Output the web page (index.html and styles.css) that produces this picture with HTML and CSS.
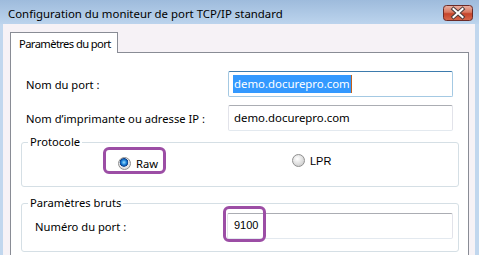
FILE: index.html
```html
<!DOCTYPE html>
<html lang="fr">
  <head>
    <meta charset="UTF-8" />
    <title>Configuration du moniteur de port TCP/IP standard</title>
    <link rel="stylesheet" href="styles.css">
  </head>
  <body>
    <div class="titlebar">
      <span class="title">Configuration du moniteur de port TCP/IP standard</span>
      <svg class="close" width="30" height="16" viewBox="0 0 30 16">
        <defs>
          <linearGradient id="closeFill" x1="0" y1="0" x2="0" y2="1">
            <stop offset="0" stop-color="#eab3a6" />
            <stop offset="0.45" stop-color="#d9775f" />
            <stop offset="0.55" stop-color="#c5432a" />
            <stop offset="1" stop-color="#d8694d" />
          </linearGradient>
        </defs>
        <rect x="0.5" y="0.5" width="29" height="15" rx="3" fill="url(#closeFill)" stroke="#6b2a27" />
        <path d="M10.5 4 L19.5 12 M19.5 4 L10.5 12" stroke="#4b3b3b" stroke-width="4" stroke-linecap="square" />
        <path d="M10.5 4 L19.5 12 M19.5 4 L10.5 12" stroke="#ffffff" stroke-width="2" stroke-linecap="square" />
      </svg>
    </div>
    <div class="client">
      <div class="tab">Paramètres du port</div>
      <div class="panel">
        <div class="row">
          <span class="label">Nom du port :</span>
          <div class="field focused"><span class="selected">demo.docurepro.com</span></div>
        </div>
        <div class="row">
          <span class="label">Nom d’imprimante ou adresse IP :</span>
          <div class="field">demo.docurepro.com</div>
        </div>

        <!-- Protocol choice -->
        <fieldset class="group">
          <legend>Protocole</legend>
          <div class="radios">
            <label class="option marked"><span class="radio checked"></span>Raw</label>
            <label class="option lpr"><span class="radio"></span>LPR</label>
          </div>
        </fieldset>

        <fieldset class="group">
          <legend>Paramètres bruts</legend>
          <div class="row raw-row">
            <span class="label">Numéro du port :</span>
            <div class="field number">9100<span class="mark"></span></div>
          </div>
        </fieldset>
      </div>
    </div>
  </body>
</html>
```

FILE: styles.css
```css
/* Windows 7 basic style dialog */
body {
  margin: 0;
  width: 479px;
  height: 255px;
  overflow: hidden;
  background-color: #c1d7ee;
  font-family: "Noto Sans", sans-serif;
  font-size: 11.2px;
  color: #000;
}
.titlebar {
  height: 24px;
  display: flex;
  justify-content: space-between;
  padding: 0 6px 0 8px;
  background: linear-gradient(#9ebbdc, #bcd4ed);
}
.title {
  font-size: 11.4px;
  line-height: 27px;
}
.close {
  margin-top: 5px;
}
.client {
  margin: 0 4px 0 3px;
  height: 223px;
  overflow: hidden;
  padding: 8px 6px 0 7px;
  background-color: #f6f2f6;
}
.tab {
  display: inline-block;
  vertical-align: top;
  height: 20px;
  padding: 0 6px 0 8px;
  line-height: 21px;
  white-space: nowrap;
  letter-spacing: -0.6px;
  border: 1px solid #898c95;
  border-bottom: none;
  background-color: #fff;
  margin-bottom: -1px;
  position: relative;
}
.panel {
  border: 1px solid #898c95;
  background-color: #fff;
  padding: 18px 9px 40px 10px;
}
.row {
  display: grid;
  grid-template-columns: 202px 225px;
  align-items: center;
  padding: 0 6px 0 5px;
  margin-bottom: 8px;
}
.label {
  white-space: nowrap;
}
.field {
  height: 26px;
  box-sizing: border-box;
  padding-left: 5px;
  line-height: 23px;
  border: 1px solid #e2e3ea;
  border-top-color: #abadb3;
  border-bottom-color: #e3e9ef;
  border-radius: 2px;
  font-size: 11.4px;
}
.field.focused {
  border-color: #a4c9e3;
  border-top-color: #3d7bad;
  padding-left: 4px;
}
.selected {
  background-color: #3399ff;
  color: #fff;
  padding: 1px 1px 2px;
  border-right: 1px solid #c2611c;
}
.group {
  margin: 0;
  padding: 0 5px 12px 0;
  border: 1px solid #d5dfe5;
  border-radius: 3px;
}
.group + .group {
  margin-top: 11px;
}
.row + .group {
  margin-top: -2px;
}
legend {
  margin-left: 6px;
  padding: 0 2px;
  line-height: 10px;
}
.radios {
  display: flex;
  align-items: center;
  padding-left: 81px;
}
.option {
  display: flex;
  align-items: center;
  gap: 5px;
}
.marked {
  width: 63px;
  height: 27px;
  box-sizing: border-box;
  padding: 6px 0 0 12px;
  border: 3px solid #9c4ea5;
  border-radius: 6px;
}
.lpr {
  margin-left: 126px;
  font-family: "Liberation Sans", sans-serif;
  font-size: 11px;
}
.radio {
  width: 13px;
  height: 13px;
  box-sizing: border-box;
  border-radius: 50%;
  border: 1px solid #8f8f8f;
  background: radial-gradient(circle at 40% 35%, #ffffff, #d4d4d4 70%);
}
.radio.checked {
  background: radial-gradient(circle at 45% 40%, #9fe0ff 0, #1a80d8 2.5px, #0d3f8a 4px, #e8e8e8 4.6px, #cfcfcf 100%);
}
.raw-row {
  grid-template-columns: 192px 226px;
  padding: 5px 0 0 13px;
  margin-bottom: 0;
}
.number {
  position: relative;
  font-family: "Liberation Sans", sans-serif;
  font-size: 11px;
  padding-left: 6px;
}
/* annotation box drawn over the port number */
.mark {
  position: absolute;
  left: -5px;
  top: -8px;
  width: 37px;
  height: 30px;
  border: 3px solid #9c4ea5;
  border-radius: 6px;
}
```
